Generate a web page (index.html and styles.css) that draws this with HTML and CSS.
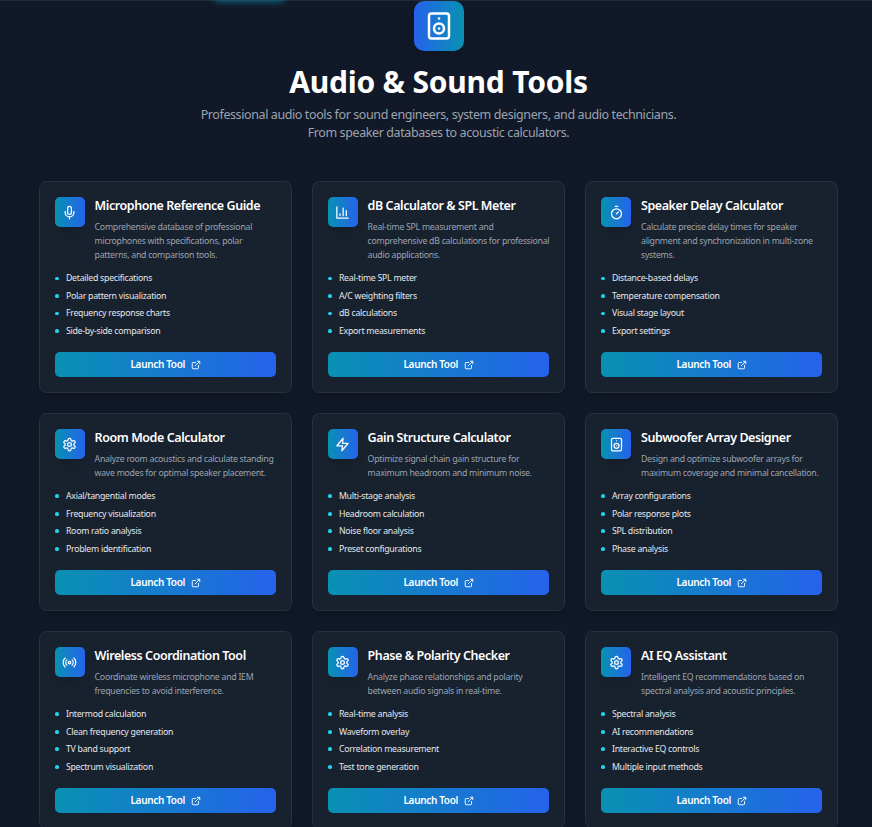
FILE: index.html
```html
<!DOCTYPE html>
<html lang="en">
<head>
<meta charset="utf-8">
<title>Audio &amp; Sound Tools</title>
<link rel="stylesheet" href="styles.css">
</head>
<body>
<svg class="sprite" aria-hidden="true">
  <symbol id="speaker" viewBox="0 0 24 24"><rect x="4" y="2" width="16" height="20" rx="2"/><path d="M12 6h.01"/><circle cx="12" cy="14" r="4"/><path d="M12 14h.01"/></symbol>
  <symbol id="mic" viewBox="0 0 24 24"><path d="M12 2a3 3 0 0 0-3 3v7a3 3 0 0 0 6 0V5a3 3 0 0 0-3-3Z"/><path d="M19 10v2a7 7 0 0 1-14 0v-2M12 19v3"/></symbol>
  <symbol id="chart" viewBox="0 0 24 24"><path d="M3 3v18h18M18 17V9M13 17V5M8 17v-3"/></symbol>
  <symbol id="timer" viewBox="0 0 24 24"><path d="M10 2h4M12 14l3-3"/><circle cx="12" cy="14" r="8"/></symbol>
  <symbol id="gear" viewBox="0 0 24 24"><path d="M12.22 2h-.44a2 2 0 0 0-2 2v.18a2 2 0 0 1-1 1.73l-.43.25a2 2 0 0 1-2 0l-.15-.08a2 2 0 0 0-2.73.73l-.22.38a2 2 0 0 0 .73 2.73l.15.1a2 2 0 0 1 1 1.72v.51a2 2 0 0 1-1 1.74l-.15.09a2 2 0 0 0-.73 2.73l.22.38a2 2 0 0 0 2.73.73l.15-.08a2 2 0 0 1 2 0l.43.25a2 2 0 0 1 1 1.73V20a2 2 0 0 0 2 2h.44a2 2 0 0 0 2-2v-.18a2 2 0 0 1 1-1.73l.43-.25a2 2 0 0 1 2 0l.15.08a2 2 0 0 0 2.73-.73l.22-.39a2 2 0 0 0-.73-2.73l-.15-.08a2 2 0 0 1-1-1.74v-.5a2 2 0 0 1 1-1.74l.15-.09a2 2 0 0 0 .73-2.73l-.22-.38a2 2 0 0 0-2.73-.73l-.15.08a2 2 0 0 1-2 0l-.43-.25a2 2 0 0 1-1-1.73V4a2 2 0 0 0-2-2z"/><circle cx="12" cy="12" r="3"/></symbol>
  <symbol id="bolt" viewBox="0 0 24 24"><path d="M13 2 3 14h9l-1 8 10-12h-9l1-8z"/></symbol>
  <symbol id="radio" viewBox="0 0 24 24"><path d="M4.9 19.1C1 15.2 1 8.8 4.9 4.9M7.8 16.2c-2.3-2.3-2.3-6.1 0-8.5M16.2 7.8c2.3 2.3 2.3 6.1 0 8.5M19.1 4.9C23 8.8 23 15.1 19.1 19"/><circle cx="12" cy="12" r="2"/></symbol>
  <symbol id="external" viewBox="0 0 24 24"><path d="M15 3h6v6M10 14 21 3M18 13v6a2 2 0 0 1-2 2H5a2 2 0 0 1-2-2V8a2 2 0 0 1 2-2h6"/></symbol>
</svg>
<div class="topbar"><span class="glow"></span></div>
<main class="page">
  <header class="hero">
    <div class="hero-icon"><svg><use href="#speaker"/></svg></div>
    <h1>Audio &amp; Sound Tools</h1>
    <p>Professional audio tools for sound engineers, system designers, and audio technicians.<br>From speaker databases to acoustic calculators.</p>
  </header>
  <section class="grid">
    <article class="card">
      <div class="head"><div class="icon"><svg><use href="#mic"/></svg></div><div><h2>Microphone Reference Guide</h2><p>Comprehensive database of professional<br>microphones with specifications, polar<br>patterns, and comparison tools.</p></div></div>
      <ul><li>Detailed specifications</li><li>Polar pattern visualization</li><li>Frequency response charts</li><li>Side-by-side comparison</li></ul>
      <a class="btn">Launch Tool<svg><use href="#external"/></svg></a>
    </article>
    <article class="card">
      <div class="head"><div class="icon"><svg><use href="#chart"/></svg></div><div><h2>dB Calculator &amp; SPL Meter</h2><p>Real-time SPL measurement and<br>comprehensive dB calculations for professional<br>audio applications.</p></div></div>
      <ul><li>Real-time SPL meter</li><li>A/C weighting filters</li><li>dB calculations</li><li>Export measurements</li></ul>
      <a class="btn">Launch Tool<svg><use href="#external"/></svg></a>
    </article>
    <article class="card">
      <div class="head"><div class="icon"><svg><use href="#timer"/></svg></div><div><h2>Speaker Delay Calculator</h2><p>Calculate precise delay times for speaker<br>alignment and synchronization in multi-zone<br>systems.</p></div></div>
      <ul><li>Distance-based delays</li><li>Temperature compensation</li><li>Visual stage layout</li><li>Export settings</li></ul>
      <a class="btn">Launch Tool<svg><use href="#external"/></svg></a>
    </article>
    <article class="card">
      <div class="head"><div class="icon"><svg><use href="#gear"/></svg></div><div><h2>Room Mode Calculator</h2><p>Analyze room acoustics and calculate standing<br>wave modes for optimal speaker placement.</p></div></div>
      <ul><li>Axial/tangential modes</li><li>Frequency visualization</li><li>Room ratio analysis</li><li>Problem identification</li></ul>
      <a class="btn">Launch Tool<svg><use href="#external"/></svg></a>
    </article>
    <article class="card">
      <div class="head"><div class="icon"><svg><use href="#bolt"/></svg></div><div><h2>Gain Structure Calculator</h2><p>Optimize signal chain gain structure for<br>maximum headroom and minimum noise.</p></div></div>
      <ul><li>Multi-stage analysis</li><li>Headroom calculation</li><li>Noise floor analysis</li><li>Preset configurations</li></ul>
      <a class="btn">Launch Tool<svg><use href="#external"/></svg></a>
    </article>
    <article class="card">
      <div class="head"><div class="icon"><svg><use href="#speaker"/></svg></div><div><h2>Subwoofer Array Designer</h2><p>Design and optimize subwoofer arrays for<br>maximum coverage and minimal cancellation.</p></div></div>
      <ul><li>Array configurations</li><li>Polar response plots</li><li>SPL distribution</li><li>Phase analysis</li></ul>
      <a class="btn">Launch Tool<svg><use href="#external"/></svg></a>
    </article>
    <article class="card">
      <div class="head"><div class="icon"><svg><use href="#radio"/></svg></div><div><h2>Wireless Coordination Tool</h2><p>Coordinate wireless microphone and IEM<br>frequencies to avoid interference.</p></div></div>
      <ul><li>Intermod calculation</li><li>Clean frequency generation</li><li>TV band support</li><li>Spectrum visualization</li></ul>
      <a class="btn">Launch Tool<svg><use href="#external"/></svg></a>
    </article>
    <article class="card">
      <div class="head"><div class="icon"><svg><use href="#gear"/></svg></div><div><h2>Phase &amp; Polarity Checker</h2><p>Analyze phase relationships and polarity<br>between audio signals in real-time.</p></div></div>
      <ul><li>Real-time analysis</li><li>Waveform overlay</li><li>Correlation measurement</li><li>Test tone generation</li></ul>
      <a class="btn">Launch Tool<svg><use href="#external"/></svg></a>
    </article>
    <article class="card">
      <div class="head"><div class="icon"><svg><use href="#gear"/></svg></div><div><h2>AI EQ Assistant</h2><p>Intelligent EQ recommendations based on<br>spectral analysis and acoustic principles.</p></div></div>
      <ul><li>Spectral analysis</li><li>AI recommendations</li><li>Interactive EQ controls</li><li>Multiple input methods</li></ul>
      <a class="btn">Launch Tool<svg><use href="#external"/></svg></a>
    </article>
  </section>
</main>
</body>
</html>
```
FILE: styles.css
```css
* { box-sizing: border-box; margin: 0; padding: 0; }
html { font-size: 10px; }
body {
  height: 827px;
  overflow: hidden;
  background: #111827;
  color: #fff;
  font-family: "Noto Sans", "Open Sans", sans-serif;
}
.sprite { position: absolute; width: 0; height: 0; }
svg { fill: none; stroke: currentColor; stroke-width: 2; stroke-linecap: round; stroke-linejoin: round; display: block; }
.topbar { height: 1px; background: #1f2937; position: relative; }
.glow {
  position: absolute; left: 214px; top: -10px; width: 71px; height: 10px; border-radius: 5px;
  box-shadow: 0 1px 7px 1px rgba(8, 145, 178, .6);
}
.page { width: 799px; margin-left: 39px; }
.hero { text-align: center; height: 180px; }
.hero-icon {
  width: 50px; height: 50px; margin: 0 auto 16px; border-radius: 10px;
  position: relative; left: .5px;
  display: grid; place-items: center;
  background: linear-gradient(90deg, #2563eb, #0891b2);
  box-shadow: 0 6px 9px -2px rgba(0, 0, 0, .12);
}
.hero-icon svg { width: 30px; height: 30px; }
h1 { font-size: 30px; line-height: 30px; font-weight: 700; letter-spacing: -.22px; margin-bottom: 9px; white-space: nowrap; }
.hero p { font-size: 12.5px; line-height: 17.5px; color: #9ca3af; letter-spacing: -.4px; white-space: nowrap; }
.grid { display: grid; grid-template-columns: repeat(3, 253px); gap: 20px; }
.card {
  padding: 15px; border: 1px solid #27313f; border-radius: 7.5px;
  background: #18212e;
  box-shadow: 0 6px 9px -2px rgba(0, 0, 0, .12);
}
.head { display: flex; gap: 9.6px; margin-bottom: 10px; }
.icon {
  flex: none; width: 30px; height: 30px; border-radius: 5px;
  display: grid; place-items: center;
  background: linear-gradient(90deg, #0891b2, #2563eb);
  box-shadow: 0 6px 9px -2px rgba(0, 0, 0, .12);
}
.icon svg { width: 15px; height: 15px; margin-right: 1px; }
.card:nth-child(3n) .head { gap: 10px; }
.card:nth-child(3n) .icon svg { margin-right: 0; }
h2 { font-size: 12.5px; line-height: 17.5px; font-weight: 600; letter-spacing: -.43px; margin-bottom: 5px; white-space: nowrap; }
.head p { font-size: 8.75px; line-height: 14.22px; color: #9ca3af; letter-spacing: -.27px; white-space: nowrap; }
ul { list-style: none; display: grid; gap: 5px; margin-bottom: 15px; }
li { display: flex; align-items: center; gap: 7.2px; font-size: 8.75px; line-height: 12.5px; color: #e5e7eb; letter-spacing: -.26px; }
li::before { content: ""; width: 3.75px; height: 3.75px; border-radius: 50%; background: #22d3ee; }
.btn {
  height: 25px; padding-bottom: 1px; border-radius: 5px; display: flex; align-items: center; justify-content: center; gap: 5.5px;
  font-size: 10px; font-weight: 600; letter-spacing: -.34px;
  background: linear-gradient(90deg, #0891b2, #2563eb);
}
.btn svg { width: 10px; height: 10px; stroke-width: 2.2; position: relative; top: .5px; }
```
